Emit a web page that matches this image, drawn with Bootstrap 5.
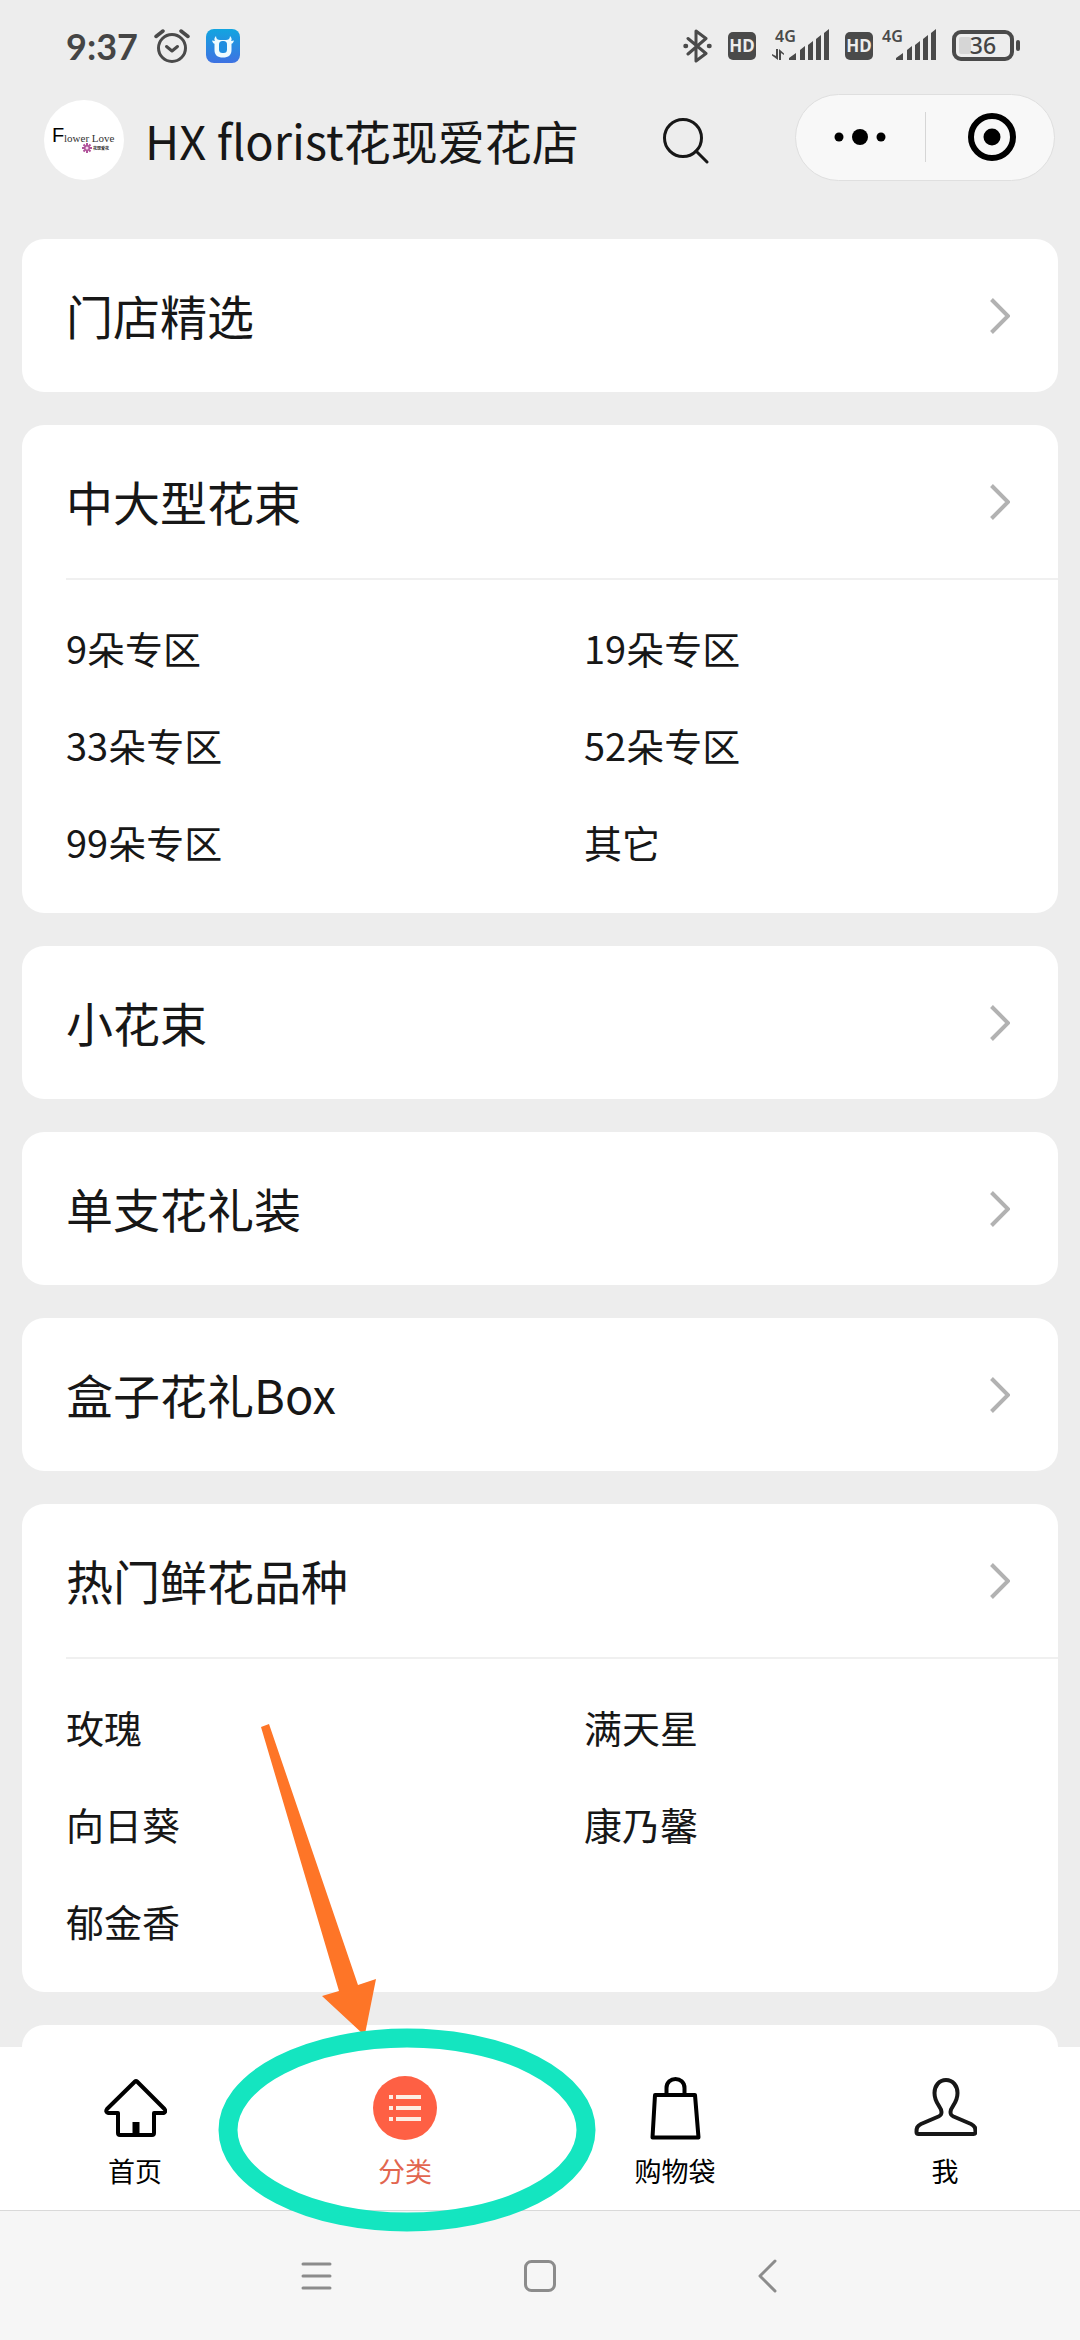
<!DOCTYPE html>
<html lang="zh-CN">
<head>
<meta charset="utf-8">
<meta name="viewport" content="width=device-width, initial-scale=1">
<title>HX florist花现爱花店</title>
<link href="https://cdn.jsdelivr.net/npm/bootstrap@5.3.0/dist/css/bootstrap.min.css" rel="stylesheet">
<style>
  body { background: #ededed; color: #171717; font-family: "Noto Sans CJK SC", "Noto Sans", sans-serif; }
  a, a:hover { color: inherit; text-decoration: none; }
  svg { display: block; flex-shrink: 0; }

  .status-bar { height: 92px; padding: 0 60px 0 66px; color: #454545; }
  .clock-text { font: 700 36px/40px "Lato", sans-serif; }
  .status-gap { gap: 16px; }
  .hd-tag { width: 28px; height: 28px; border-radius: 5px; background: #4a4a4a; color: #ededed; font: 700 17px/28px "Noto Sans", sans-serif; text-align: center; }
  .signal-tight { margin-left: -8px; }

  .shop-bar { height: 90px; padding: 0 25px 0 44px; }
  .shop-bar .shop-logo, .shop-bar .shop-name { margin-top: 6px; }
  .shop-name { font-size: 47px; line-height: 60px; margin: 0 0 0 21px; font-weight: 400; }
  .search-btn { margin: 5px 80px 0 auto; }
  .capsule { width: 260px; height: 87px; background: #f8f8f8; border: 1px solid #dfdfdf; border-radius: 44px; }
  .capsule-line { width: 1px; height: 50px; background: #d6d6d6; }
  .plain-btn { border: 0; background: none; padding: 0; color: inherit; }
  .capsule .close-btn { padding-left: 4px; }

  .catalog { padding: 57px 22px 0; gap: 33px; min-height: 0; scrollbar-width: none; }
  .catalog::-webkit-scrollbar { display: none; }
  .shop-card { border: 0; border-radius: 22px; flex-shrink: 0; }
  .card-head { height: 153px; padding: 0 48px 0 44px; }
  .card-head h2 { font-size: 47px; line-height: 60px; margin: 0 0 2px; font-weight: 400; }
  .shop-card > .card-rule { margin: 0 0 0 44px; border-top: 2px solid #f0f0f0; opacity: 1; }
  .sub-list { padding: 19px 0 23px; }
  .sub-list a { font-size: 38px; line-height: 97px; padding-left: 44px; }

  .tab-bar { height: 163px; background: #fff; }
  .tab-link { padding-top: 28px; color: #000; }
  .tab-link span { font-size: 27px; line-height: 36px; margin-top: 12px; }
  .tab-link.active span { color: #e2664f; }
  .mark-ring { position: absolute; left: 50%; bottom: -24px; margin-left: -188px; pointer-events: none; z-index: 2; }
  .system-bar { height: 130px; background: #f6f6f6; border-top: 1px solid #d9d9d9; gap: 192px; color: #8c8c8c; }
</style>
<script src="https://cdn.jsdelivr.net/npm/bootstrap@5.3.0/dist/js/bootstrap.bundle.min.js"></script>
</head>
<body>
<div class="vh-100 d-flex flex-column overflow-hidden">

  <div class="status-bar d-flex align-items-center justify-content-between flex-shrink-0">
    <div class="d-flex align-items-center status-gap">
      <span class="clock-text">9:37</span>
      <svg width="36" height="36" viewBox="0 0 36 36" fill="none" stroke="#4a4a4a" stroke-linecap="round">
        <circle cx="18" cy="20" r="13.5" stroke-width="3"/>
        <path d="M12.5 18.5 18 23l5.500-4.500" stroke-width="3" stroke-linejoin="round"/>
        <path d="M2 8.500 9 3M34 8.500 27 3" stroke-width="3.500"/>
      </svg>
      <svg width="34" height="34" viewBox="0 0 34 34">
        <defs><linearGradient id="appBlue" x1="0" y1="0" x2="0" y2="1"><stop offset="0" stop-color="#12a5e0"/><stop offset="1" stop-color="#3e72e2"/></linearGradient></defs>
        <rect width="34" height="34" rx="8" fill="url(#appBlue)"/>
        <path d="M10 7c0 3 2 4 4 4h6c2 0 4-1 4-4 2 2 2 4 1 5l3-.5c-.5 2-1.500 3-2.500 3.200V21c0 5-3 7.500-8.500 7.500S8.500 26 8.500 21v-6.300C7.500 14.500 6.500 13.500 6 11.500l3 .5c-1-1-1-3 1-5z" fill="#effcff"/>
        <rect x="13" y="12" width="8" height="12" rx="3.500" fill="#1f8fe0"/>
      </svg>
    </div>
    <div class="d-flex align-items-center status-gap">
      <svg width="29" height="34" viewBox="0 0 29 34" fill="none" stroke="#4a4a4a" stroke-width="3" stroke-linejoin="round" stroke-linecap="round">
        <path d="M5 9.500 23 24.500 13 32V2l10 7.500L5 25"/>
        <path d="M2.500 17h.5M26 17h.5" stroke-width="4.500"/>
      </svg>
      <span class="hd-tag">HD</span>
      <svg width="57" height="50" viewBox="0 -8 57 50" fill="#4a4a4a">
        <text x="3" y="13" font-family="Noto Sans" font-weight="600" font-size="16">4G</text>
        <path d="M4 31V20h2v11L0 26.500V25l4 2zM7 31V20l5 4.500V26l-3-2v7z"/>
        <path d="M17 29l7-5v7h-7zM28 21l5-4v14h-5zM36 16l5-4v19h-5zM44 10l5-4v25h-5zM52 4l5-4v31h-5z"/>
      </svg>
      <span class="hd-tag">HD</span>
      <svg class="signal-tight" width="55" height="50" viewBox="0 -8 55 50" fill="#4a4a4a">
        <text x="1" y="13" font-family="Noto Sans" font-weight="600" font-size="16">4G</text>
        <path d="M15 29l7-5v7h-7zM26 21l5-4v14h-5zM34 16l5-4v19h-5zM42 10l5-4v25h-5zM50 4l5-4v31h-5z"/>
      </svg>
      <svg width="68" height="32" viewBox="0 0 68 32">
        <rect x="2" y="2" width="58" height="27" rx="7" fill="none" stroke="#4a4a4a" stroke-width="4"/>
        <rect x="7" y="7" width="12" height="17" rx="2" fill="#d6d6d6"/>
        <rect x="64" y="10" width="4" height="11" rx="2" fill="#4a4a4a"/>
        <text x="31" y="24" text-anchor="middle" font-family="Noto Sans" font-weight="500" font-size="23" fill="#444">36</text>
      </svg>
    </div>
  </div>

  <header class="shop-bar d-flex align-items-center flex-shrink-0">
    <svg class="shop-logo" width="80" height="80" viewBox="0 0 80 80" role="img" aria-label="Flower Love">
      <circle cx="40" cy="40" r="40" fill="#fff"/>
      <text x="8" y="42" font-family="Liberation Sans" font-size="20" fill="#000">F</text>
      <text x="20" y="42" font-family="Liberation Serif" font-size="11" fill="#333">lower Love</text>
      <g stroke="#b0529a" stroke-width="2"><path d="M43 43v10M38 48h10M39.500 44.500l7 7M46.500 44.500l-7 7"/></g>
      <circle cx="43" cy="48" r="1.500" fill="#f3d9ee"/>
      <text x="49" y="50" font-family="Noto Sans CJK SC" font-size="4" font-weight="700" fill="#222">花现爱花</text>
    </svg>
    <h1 class="shop-name text-nowrap">HX florist花现爱花店</h1>
    <button class="plain-btn search-btn" type="button" aria-label="搜索">
      <svg width="56" height="48" viewBox="0 0 56 48" fill="none" stroke="#171717" stroke-width="3" stroke-linecap="round">
        <circle cx="24" cy="22" r="18.500"/><path d="M37 35l11 11"/>
      </svg>
    </button>
    <div class="capsule d-flex align-items-center">
      <button class="plain-btn flex-fill d-flex justify-content-center" type="button" aria-label="更多">
        <svg width="52" height="20" viewBox="0 0 52 20"><circle cx="5" cy="10" r="4.500"/><circle cx="26" cy="10" r="8"/><circle cx="47" cy="10" r="4.500"/></svg>
      </button>
      <span class="capsule-line"></span>
      <button class="plain-btn close-btn flex-fill d-flex justify-content-center" type="button" aria-label="关闭">
        <svg width="48" height="48" viewBox="0 0 48 48"><circle cx="24" cy="24" r="21" fill="none" stroke="#000" stroke-width="6"/><circle cx="24" cy="24" r="8.500"/></svg>
      </button>
    </div>
  </header>

  <svg width="0" height="0" class="position-absolute">
    <symbol id="chev" viewBox="0 0 20 36"><path d="M1.500 1.500 18 18 1.500 34.500" fill="none" stroke="#b2b2b2" stroke-width="4"/></symbol>
  </svg>

  <main class="catalog flex-grow-1 d-flex flex-column overflow-auto">
    <section class="card shop-card">
      <a href="#" class="card-head d-flex align-items-center justify-content-between"><h2>门店精选</h2><svg width="20" height="36"><use href="#chev"/></svg></a>
    </section>
    <section class="card shop-card">
      <a href="#" class="card-head d-flex align-items-center justify-content-between"><h2>中大型花束</h2><svg width="20" height="36"><use href="#chev"/></svg></a>
      <hr class="card-rule">
      <div class="sub-list row g-0 row-cols-2">
        <a href="#" class="col">9朵专区</a><a href="#" class="col">19朵专区</a>
        <a href="#" class="col">33朵专区</a><a href="#" class="col">52朵专区</a>
        <a href="#" class="col">99朵专区</a><a href="#" class="col">其它</a>
      </div>
    </section>
    <section class="card shop-card">
      <a href="#" class="card-head d-flex align-items-center justify-content-between"><h2>小花束</h2><svg width="20" height="36"><use href="#chev"/></svg></a>
    </section>
    <section class="card shop-card">
      <a href="#" class="card-head d-flex align-items-center justify-content-between"><h2>单支花礼装</h2><svg width="20" height="36"><use href="#chev"/></svg></a>
    </section>
    <section class="card shop-card">
      <a href="#" class="card-head d-flex align-items-center justify-content-between"><h2>盒子花礼Box</h2><svg width="20" height="36"><use href="#chev"/></svg></a>
    </section>
    <section class="card shop-card">
      <a href="#" class="card-head d-flex align-items-center justify-content-between"><h2>热门鲜花品种</h2><svg width="20" height="36"><use href="#chev"/></svg></a>
      <hr class="card-rule">
      <div class="sub-list row g-0 row-cols-2">
        <a href="#" class="col">玫瑰</a><a href="#" class="col">满天星</a>
        <a href="#" class="col">向日葵</a><a href="#" class="col">康乃馨</a>
        <a href="#" class="col">郁金香</a>
      </div>
    </section>
    <section class="card shop-card"><div class="card-head"></div></section>
  </main>

  <nav class="tab-bar d-flex flex-shrink-0">
    <a href="#" class="tab-link col-3 d-flex flex-column align-items-center">
      <svg width="64" height="66" viewBox="0 0 64 66" fill="none" stroke="#000" stroke-width="4" stroke-linejoin="round">
        <path d="M34 6.500Q33 5.500 32 6.500L4 34q-2 3 1.500 4H15v20q0 2 2 2h32q2 0 2-2V38h9.500q3-1 1-4z"/>
        <path d="M33 47v13" stroke-width="7"/>
      </svg>
      <span>首页</span>
    </a>
    <a href="#" class="tab-link active col-3 d-flex flex-column align-items-center position-relative" aria-current="page">
      <svg width="64" height="66" viewBox="0 0 64 66">
        <circle cx="32" cy="33" r="32" fill="#fe6044"/>
        <path d="M16 22h4M23 22h25M16 33h4M23 33h25M16 44h4M23 44h25" stroke="#fdeee4" stroke-width="4"/>
      </svg>
      <span>分类</span>
      <!-- hint drawn over the active tab: arrow and ring -->
      <svg class="mark-ring" width="382" height="514" viewBox="217 1720 382 514">
        <path d="M261 1727l8-3 89 261 18-6-11 55h-2l-41-38 17-5z" fill="#fe7527"/>
        <ellipse cx="407" cy="2130" rx="179" ry="92" fill="none" stroke="#14e5c0" stroke-width="19"/>
      </svg>
    </a>
    <a href="#" class="tab-link col-3 d-flex flex-column align-items-center">
      <svg width="64" height="66" viewBox="0 0 64 66" fill="none" stroke="#000" stroke-width="4" stroke-linejoin="round">
        <path d="M12 20h40l3.500 42.500h-46z"/><path d="M23.500 20v-7c0-12 18-12 18 0v7"/>
      </svg>
      <span>购物袋</span>
    </a>
    <a href="#" class="tab-link col-3 d-flex flex-column align-items-center">
      <svg width="64" height="66" viewBox="0 0 64 66" fill="none" stroke="#171717" stroke-width="4" stroke-linejoin="round">
        <path d="M33 5c-7 0-11.500 6-11.500 13 0 11 7 13 7 19 0 3-1 3.500-3 4.500L8 49c-4 2-4.500 4-4.500 8 0 1 .5 2 2 2h55c1.500 0 2-1 2-2 0-4-.5-6-4.500-8l-17.500-7.500c-2-1-3-1.500-3-4.500 0-6 7-8 7-19C44.500 11 40 5 33 5z"/>
      </svg>
      <span>我</span>
    </a>
  </nav>

  <div class="system-bar d-flex align-items-center justify-content-center flex-shrink-0">
    <button class="plain-btn" type="button" aria-label="最近任务"><svg width="32" height="34" viewBox="0 0 32 34" fill="none" stroke="currentColor" stroke-width="3" stroke-linecap="round"><path d="M3 5h27M3 17h27M3 29h27"/></svg></button>
    <button class="plain-btn" type="button" aria-label="主屏幕"><svg width="32" height="34" viewBox="0 0 32 34" fill="none" stroke="currentColor" stroke-width="3"><rect x="1.500" y="2.500" width="29" height="29" rx="6"/></svg></button>
    <button class="plain-btn" type="button" aria-label="返回"><svg width="32" height="34" viewBox="0 0 32 34" fill="none" stroke="currentColor" stroke-width="3" stroke-linecap="round" stroke-linejoin="round"><path d="M27 2 12 17l15 15"/></svg></button>
  </div>
</div>
</body>
</html>
